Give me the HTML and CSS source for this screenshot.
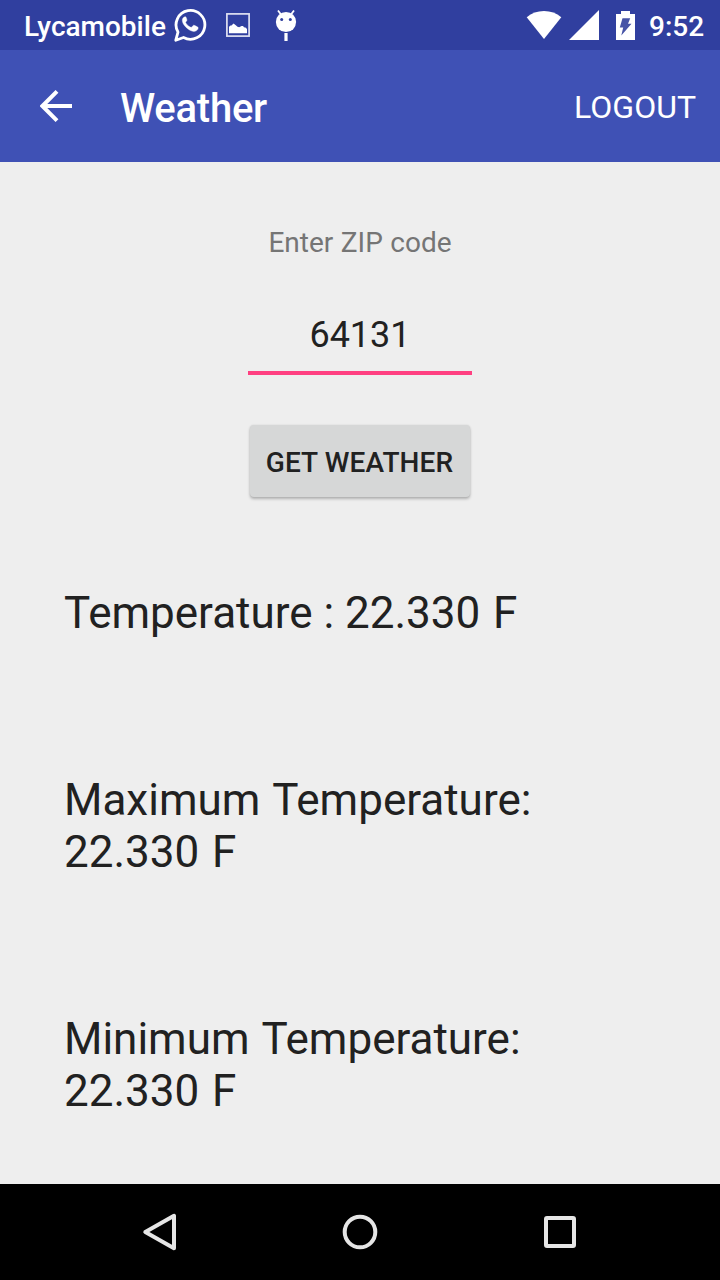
FILE: index.html
```html
<!DOCTYPE html>
<html lang="en">
<head>
<meta charset="utf-8">
<title>Weather</title>
<link rel="stylesheet" href="styles.css">
</head>
<body>
<div class="screen">
  <div class="status-bar">
    <span class="carrier">Lycamobile</span>
    <svg class="icon-chat" width="34" height="36" viewBox="173 7 34 36">
      <path d="M175.8 40.2l2.2-8.1a14.4 14.4 0 1 1 5.5 5.4z" fill="none" stroke="#fff" stroke-width="2.8" stroke-linejoin="round"/>
      <path d="M184.9 16.800c-1.500.3-2.600 1.700-2.600 3.800 0 4 6.600 10.800 11.700 10.800 2.200 0 4-1.400 4.200-3.300.1-.8-.2-1-4-2.800-.9-.4-1.200.4-2.300 1.700-.6.7-1.500.2-3-.7-1.300-.9-2.500-2.200-3.200-3.500-.4-.8.700-1.400 1.200-2.400.3-.6-.8-3.300-1.100-3.500-.2-.2-.5-.2-.9-.1z" fill="#fff" stroke="#fff" stroke-width=".4"/>
    </svg>
    <svg class="icon-image" width="24" height="24" viewBox="0 0 24 24">
      <rect x=".9" y=".9" width="22.200" height="22.200" fill="none" stroke="#dfe1f2" stroke-width="1.700"/>
      <path d="M3 20.200v-6.500l1.500-1.200h1l2-2 2 1.500 2 1.700 1.700.5 2.300-1.200h1.500l1 1.200 2 .5 1 1.500v4z" fill="#fff"/>
    </svg>
    <svg class="icon-droid" width="22" height="32" viewBox="275 10 22 32">
      <circle cx="286" cy="22" r="10.100" fill="#fff"/>
      <path d="M278 10.500l3 4M294 10.500l-3 4" stroke="#fff" stroke-width="1.800"/>
      <circle cx="281.700" cy="19.500" r="1.500" fill="#303f9f"/>
      <circle cx="290.300" cy="19.500" r="1.500" fill="#303f9f"/>
      <path d="M284.400 33h3.200v8h-3.200z" fill="#fff"/>
    </svg>
    <svg class="icon-wifi" width="36" height="30" viewBox="526 10 36 30">
      <path d="M526.700 17.200Q534 11 544 11t17.300 6.200L544 39z" fill="#fff"/>
    </svg>
    <svg class="icon-signal" width="30" height="30" viewBox="0 0 30 30">
      <path d="M30 0v30H0z" fill="#fff"/>
    </svg>
    <svg class="icon-battery" width="19" height="29" viewBox="0 0 19 29">
      <path d="M0 3h5V0h9v3h5v26H0z" fill="#fff"/>
      <path d="M6.500 7.300h7.700l-2.200 5.500h3.500L5.300 24.500l1.900-8H3.800z" fill="#4653a6"/>
    </svg>
    <span class="clock">9:52</span>
  </div>
  <header class="app-bar">
    <svg class="back" width="32" height="32" viewBox="0 0 32 32">
      <path d="M32 16H4M17 1.400L2.400 16 17 30.600" fill="none" stroke="#fff" stroke-width="4"/>
    </svg>
    <h1 class="title">Weather</h1>
    <span class="logout">LOGOUT</span>
  </header>
  <main class="content">
    <div class="zip-label">Enter ZIP code</div>
    <div class="zip-field">64131</div>
    <button class="submit">GET WEATHER</button>
    <div class="readings">
      <p class="reading">Temperature : <span class="value">22.330 F</span></p>
      <p class="reading"><span class="value">Maximum Temperature:<br>22.330 F</span></p>
      <p class="reading"><span class="value">Minimum Temperature:<br>22.330 F</span></p>
    </div>
  </main>
  <nav class="nav-bar">
    <svg width="40" height="40" viewBox="0 0 40 40"><path d="M34 3.800v32.400L5.300 20z" class="nav-shape"/></svg>
    <svg width="40" height="40" viewBox="0 0 40 40"><circle cx="20" cy="20" r="15.300" class="nav-shape"/></svg>
    <svg width="40" height="40" viewBox="0 0 40 40"><rect x="6" y="6" width="28" height="28" rx="1" class="nav-shape"/></svg>
  </nav>
</div>
</body>
</html>
```
FILE: styles.css
```css
* { box-sizing: border-box; }
body {
  margin: 0;
  font-family: Roboto, sans-serif;
  color: #212121;
}
.screen {
  width: 720px;
  height: 1280px;
  display: flex;
  flex-direction: column;
  background: #eee;
  overflow: hidden;
}
.status-bar {
  height: 50px;
  flex: none;
  display: flex;
  align-items: center;
  padding: 0 16px 0 24px;
  background: #303f9f;
  color: #fff;
  font-size: 28px;
  font-weight: 500;
  white-space: nowrap;
}
.status-bar svg { flex: none; }
.carrier { width: 149px; padding-top: 3px; }
.icon-image { margin-left: 19px; }
.icon-droid { margin-left: 25px; margin-top: 2px; }
.icon-wifi { margin-left: auto; }
.icon-signal { margin-left: 7px; }
.icon-battery { margin-left: 17px; }
.clock { width: 55px; margin-left: 14px; padding-top: 3px; }
.app-bar {
  height: 112px;
  flex: none;
  display: flex;
  align-items: center;
  padding: 0 24px 0 40px;
  background: #3f51b5;
  color: #fff;
}
.title {
  margin: 5px 0 0 48px;
  font-size: 40px;
  font-weight: 500;
  letter-spacing: -.25px;
}
.logout { margin: 2px 0 0 auto; font-size: 32px; }
.content {
  flex: 1;
  display: flex;
  flex-direction: column;
  align-items: center;
  padding-top: 64px;
}
.zip-label {
  height: 33px;
  line-height: 33px;
  font-size: 28px;
  color: #757575;
  word-spacing: .5px;
}
.zip-field {
  width: 224px;
  height: 74px;
  margin-top: 42px;
  padding-top: 13px;
  border-bottom: 4px solid #ff4081;
  line-height: 42px;
  font-size: 36px;
  text-align: center;
}
.submit {
  width: 220px;
  height: 72px;
  margin: 50px 1px 0 0;
  padding: 2px 0 0;
  border: 0;
  border-radius: 4px;
  background: #d6d7d7;
  box-shadow: 0 2px 3px rgba(0, 0, 0, .25), 0 0 2px rgba(0, 0, 0, .1);
  color: #212121;
  font: 500 28px Roboto, sans-serif;
  letter-spacing: .12px;
  white-space: nowrap;
}
.readings {
  align-self: stretch;
  display: flex;
  flex-direction: column;
  gap: 135px;
  padding: 90px 64px 0;
}
.reading { margin: 0; font-size: 44px; line-height: 52px; }
.value { word-spacing: 1.8px; }
.nav-bar {
  height: 96px;
  flex: none;
  display: flex;
  align-items: center;
  justify-content: space-between;
  padding: 0 140px;
  background: #000;
}
.nav-shape {
  fill: none;
  stroke: #e6e6e6;
  stroke-width: 4;
  stroke-linejoin: round;
}
```
